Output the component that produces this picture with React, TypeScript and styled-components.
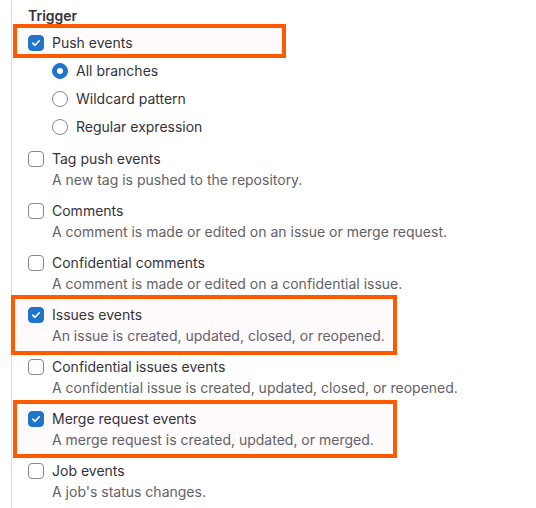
import React from "react";
import styled, { createGlobalStyle, css } from "styled-components";

const Global = createGlobalStyle`
  html, body { margin: 0; padding: 0; background: #ffffff; }
  body { font-family: Inter, "Noto Sans", sans-serif; color: #333238; font-size: 14px; }
`;

const Page = styled.div`
  width: 536px;
  height: 508px;
  overflow: hidden;
  padding-left: 11px;
  box-sizing: border-box;
`;

const Section = styled.div`
  border-left: 1px solid #dcdcde;
  padding: 6px 0 0 16px;
  height: 100%;
  box-sizing: border-box;
  display: flex;
  flex-direction: column;
`;

const Heading = styled.div`
  font-weight: 600;
  line-height: 20px;
  margin-bottom: 7px;
`;

type HL = { top: number; bottom: number; left: number; width: number };

const highlight = (hl?: HL) =>
  hl &&
  css`
    &::before {
      content: "";
      position: absolute;
      top: ${hl.top}px;
      bottom: ${hl.bottom}px;
      left: ${hl.left}px;
      width: ${hl.width}px;
      border: 4px solid #ff5a00;
      box-sizing: border-box;
      background: rgba(255, 90, 120, 0.025);
      pointer-events: none;
    }
  `;

const Block = styled.div<{ $hl?: HL }>`
  position: relative;
  display: flex;
  flex-direction: column;
  margin-bottom: 11px;
  ${(p) => highlight(p.$hl)}
`;

const Row = styled.label<{ $hl?: HL }>`
  position: relative;
  display: flex;
  align-items: center;
  gap: 8px;
  line-height: 20px;
  ${(p) => highlight(p.$hl)}
`;

const Box = styled.span<{ $checked?: boolean }>`
  width: 16px;
  height: 16px;
  box-sizing: border-box;
  border-radius: 4px;
  flex: none;
  display: flex;
  align-items: center;
  justify-content: center;
  ${(p) =>
    p.$checked
      ? css`
          background: #1f75cb;
          border: 1px solid #1f75cb;
        `
      : css`
          background: #fff;
          border: 1px solid #89888d;
        `}
`;

const Radio = styled.span<{ $checked?: boolean }>`
  width: 16px;
  height: 16px;
  box-sizing: border-box;
  border-radius: 50%;
  flex: none;
  display: flex;
  align-items: center;
  justify-content: center;
  ${(p) =>
    p.$checked
      ? css`
          background: #1f75cb;
          border: 1px solid #1f75cb;
          &::after {
            content: "";
            width: 6px;
            height: 6px;
            border-radius: 50%;
            background: #fff;
          }
        `
      : css`
          background: #fff;
          border: 1px solid #89888d;
        `}
`;

const Desc = styled.div`
  color: #626168;
  line-height: 20px;
  margin-top: 1px;
  padding-left: 24px;
`;

const RadioGroup = styled.div`
  display: flex;
  flex-direction: column;
  gap: 8px;
  padding-left: 24px;
  margin-top: 8px;
  margin-bottom: 12px;
`;

const Check = () => (
  <svg width="10" height="10" viewBox="0 0 10 10" fill="none">
    <path d="M1.8 5.2 L4 7.3 L8.3 2.8" stroke="#fff" strokeWidth="1.6" strokeLinecap="round" strokeLinejoin="round" />
  </svg>
);

type Item = { label: string; desc: string; checked?: boolean; hl?: HL };

const items: Item[] = [
  { label: "Tag push events", desc: "A new tag is pushed to the repository." },
  { label: "Comments", desc: "A comment is made or edited on an issue or merge request." },
  { label: "Confidential comments", desc: "A comment is made or edited on a confidential issue." },
  {
    label: "Issues events",
    desc: "An issue is created, updated, closed, or reopened.",
    checked: true,
    hl: { top: -10, bottom: -9, left: -17, width: 386 },
  },
  { label: "Confidential issues events", desc: "A confidential issue is created, updated, closed, or reopened." },
  {
    label: "Merge request events",
    desc: "A merge request is created, updated, or merged.",
    checked: true,
    hl: { top: -9, bottom: -8, left: -15, width: 384 },
  },
  { label: "Job events", desc: "A job's status changes." },
];

export default function App() {
  return (
    <>
      <Global />
      <Page>
        <Section>
          <Heading>Trigger</Heading>
          <Row $hl={{ top: -9, bottom: -5, left: -15, width: 273 }}>
            <Box $checked>
              <Check />
            </Box>
            Push events
          </Row>
          <RadioGroup>
            <Row>
              <Radio $checked />
              All branches
            </Row>
            <Row>
              <Radio />
              Wildcard pattern
            </Row>
            <Row>
              <Radio />
              Regular expression
            </Row>
          </RadioGroup>
          {items.map((it) => (
            <Block key={it.label} $hl={it.hl}>
              <Row>
                <Box $checked={it.checked}>{it.checked && <Check />}</Box>
                {it.label}
              </Row>
              <Desc>{it.desc}</Desc>
            </Block>
          ))}
        </Section>
      </Page>
    </>
  );
}
